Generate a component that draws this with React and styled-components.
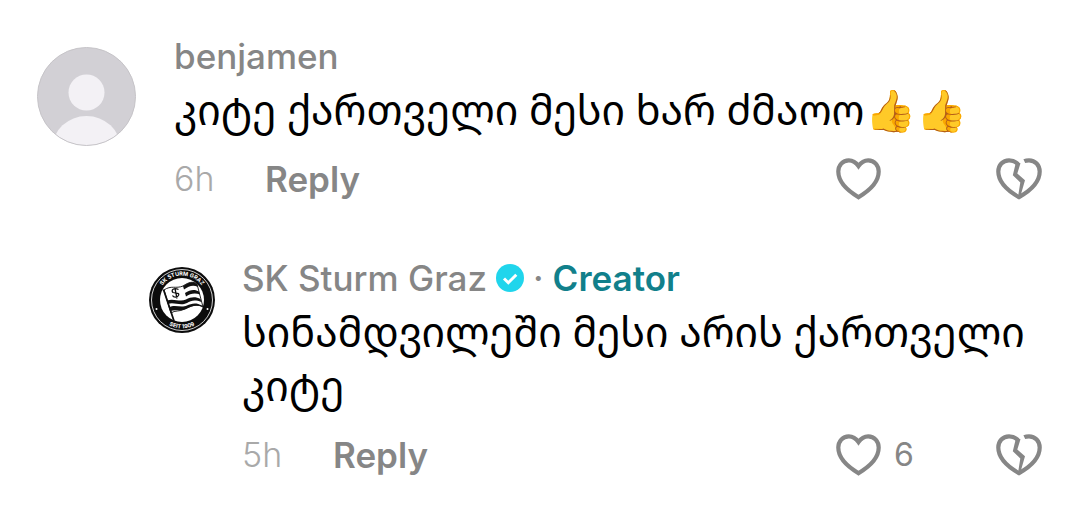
import React, { useState } from 'react';
import styled, { createGlobalStyle } from 'styled-components';


const GlobalStyle = createGlobalStyle`
    body {
        margin: 0;
        background: #ffffff;
        font-family: Inter, 'DejaVu Sans', sans-serif;
    }
`;

const CommentList = styled.main`
    display: flex;
    flex-direction: column;
    gap: 56px;
    padding: 36px 38px 36px 37px;
`;

const Comment = styled.article`
    display: flex;
    align-items: flex-start;
    gap: ${({ $reply }) => ($reply ? '27px' : '38px')};
    padding-left: ${({ $reply }) => ($reply ? '112px' : '0')};
`;

const Avatar = styled.svg`
    flex: none;
    display: block;
    width: ${({ $small }) => ($small ? '66px' : '99px')};
    height: ${({ $small }) => ($small ? '66px' : '99px')};
    margin-top: ${({ $small }) => ($small ? '9px' : '11px')};
`;

const Content = styled.div`
    flex: 1;
    min-width: 0;
`;

const NameRow = styled.div`
    display: flex;
    align-items: center;
    gap: 9px;
    height: 40px;
`;

const UserName = styled.a`
    color: #868686;
    font-size: 35px;
    font-weight: 500;
    line-height: 38px;
    text-decoration: none;
`;

const Dot = styled.span`
    color: #868686;
    font-size: 35px;
    font-weight: 500;
    line-height: 38px;
`;

const Creator = styled.span`
    color: #11808b;
    font-size: 35px;
    font-weight: 600;
    line-height: 38px;
`;

const CheckIcon = styled.svg`
    width: 28px;
    height: 28px;
`;

const Message = styled.p`
    margin: 6px 0 20px;
    color: #000000;
    font-family: 'Noto Sans Georgian', 'DejaVu Sans', sans-serif;
    font-size: 41px;
    line-height: 54px;
`;

const Actions = styled.div`
    display: flex;
    align-items: center;
    height: 46px;
`;

const Time = styled.time`
    color: #a9a9a9;
    font-size: 34px;
    font-weight: 300;
    line-height: 40px;
    width: 91px;
`;

const ActionButton = styled.button`
    display: flex;
    align-items: center;
    gap: 12px;
    padding: 0;
    border: none;
    background: none;
    color: #868686;
    font-family: inherit;
    font-size: ${({ $bold }) => ($bold ? '35px' : '32px')};
    font-weight: ${({ $bold }) => ($bold ? 600 : 400)};
    line-height: 40px;
    cursor: pointer;
`;

const Votes = styled.div`
    display: grid;
    grid-template-columns: 160px 46px;
    margin-left: auto;
`;

const VoteIcon = styled.svg`
    width: 46px;
    height: 42px;
    fill: ${({ $filled }) => ($filled ? '#868686' : 'none')};
    stroke: #868686;
    stroke-width: 4.2;
`;

const Heart = ({ filled }) => (
    <VoteIcon $filled={filled} viewBox="0 0 46 42" aria-hidden="true">
        <path d="M22.5 8C20 4.400 16.700 2.300 12.800 2.300C6.700 2.300 2.300 7.200 2.300 13.600C2.300 24 12 33 22.500 39.200C33 33 42.700 24 42.700 13.600C42.700 7.200 38.300 2.300 32.200 2.300C28.300 2.300 25 4.400 22.500 8Z" />
    </VoteIcon>
);

const BrokenHeart = () => (
    <VoteIcon viewBox="0 0 46 42" aria-hidden="true">
        <path d="M22 6C19.500 3.500 16.500 2.300 13 2.300C6.800 2.300 2.300 7.200 2.300 13.600C2.300 24 12 33 23 39.200C34 33 43.700 24 43.700 13.600C43.700 7.200 39.200 2.300 33 2.300C31.300 2.300 29.800 2.500 28.300 3.200" />
        <path d="M20 4L24.500 5.300L21.300 15.500L29 22.300L24.200 39H22L24.300 24.500L16.800 17.200Z" fill="#868686" stroke="none" />
    </VoteIcon>
);

const DefaultAvatar = () => (
    <Avatar viewBox="0 0 99 99" role="img" aria-label="benjamen">
        <clipPath id="face"><circle cx="49.500" cy="49.500" r="49" /></clipPath>
        <g clipPath="url(#face)">
            <rect width="99" height="99" fill="#d2d0d5" />
            <circle cx="49.500" cy="45.500" r="18" fill="#f3f1f5" />
            <ellipse cx="49.500" cy="101" rx="34" ry="32" fill="#f3f1f5" />
        </g>
        <circle cx="49.500" cy="49.500" r="49" fill="none" stroke="#c6c4c8" />
    </Avatar>
);

const ClubAvatar = () => (
    <Avatar $small viewBox="0 0 66 66" role="img" aria-label="SK Sturm Graz">
        <circle cx="33" cy="33" r="33" fill="#0c0c0c" />
        <circle cx="33" cy="33" r="30.500" fill="none" stroke="#e6e6e6" strokeWidth="0.900" />
        <circle cx="33" cy="33" r="22" fill="#ffffff" />
        <path id="ringTop" d="M8.500 33A24.500 24.500 0 0 1 57.500 33" fill="none" />
        <path id="ringBottom" d="M4.700 33A28.300 28.300 0 0 0 61.300 33" fill="none" />
        <g fill="#ffffff" fontFamily="Inter, sans-serif" fontSize="5.500" fontWeight="700" textAnchor="middle">
            <text><textPath href="#ringTop" startOffset="50%">SK STURM GRAZ</textPath></text>
            <text><textPath href="#ringBottom" startOffset="50%">SEIT 1909</textPath></text>
        </g>
        <circle cx="7.500" cy="42" r="1" fill="#ffffff" />
        <circle cx="58.500" cy="42" r="1" fill="#ffffff" />
        <path d="M15 23C22 18 27 22 34 19C40 15 44 14 48 17L54 40C47 36 42 39 36 42C30 45 26 43 22 46Z" fill="#ffffff" stroke="#111111" strokeWidth="0.900" />
        <path d="M34 19C40 15 44 14 48 17L49 20C44 17.500 40 19 35 22.500Z" fill="#111111" />
        <path d="M36 26C41 22.500 46 22 50 24.500L51 27.500C46 25.500 41 26.500 37 29.500Z" fill="#111111" />
        <path d="M18 33.500C25 31 31 35.500 37 32.500C42 29.500 47 29.500 51.500 32L52.300 35C46 32.500 42 33.500 38 36C31 39.500 25 34.500 19 37Z" fill="#111111" />
        <path d="M20 40.500C26 37 32 41.500 38 38.500C42 36.500 47 35 53 38.500L54 40C47 37.500 42 39.500 37 42C31 44.500 26 42 21.500 44Z" fill="#111111" />
        <path d="M29.500 22.500C25 20.500 21.500 23 24 25.500C27 26.500 31 25.500 29.500 28.500C28 31 24.500 30.500 23.500 28.500M26 21.500L28 31.500" fill="none" stroke="#111111" strokeWidth="1.300" />
        <path d="M14.500 22.500L25 54" stroke="#111111" strokeWidth="1.800" />
    </Avatar>
);

const Verified = () => (
    <CheckIcon viewBox="0 0 28 28" role="img" aria-label="Verified">
        <circle cx="14" cy="14" r="14" fill="#20d5ec" />
        <path d="M8 14.500L12.300 18.700L20.300 10.800" fill="none" stroke="#ffffff" strokeWidth="3" />
    </CheckIcon>
);

const CommentItem = ({ name, text, time, likes, isCreator, reply, avatar }) => {
    const [liked, setLiked] = useState(false);

    return (
        <Comment $reply={reply}>
            {avatar}
            <Content>
                <NameRow>
                    <UserName href="#">{name}</UserName>
                    {isCreator && (
                        <>
                            <Verified />
                            <Dot>·</Dot>
                            <Creator>Creator</Creator>
                        </>
                    )}
                </NameRow>
                <Message lang="ka">{text}</Message>
                <Actions>
                    <Time>{time}</Time>
                    <ActionButton $bold>Reply</ActionButton>
                    <Votes>
                        <ActionButton aria-label="Like" onClick={() => setLiked(!liked)}>
                            <Heart filled={liked} />
                            {likes}
                        </ActionButton>
                        <ActionButton aria-label="Dislike">
                            <BrokenHeart />
                        </ActionButton>
                    </Votes>
                </Actions>
            </Content>
        </Comment>
    );
};

export default function App() {
    return (
        <>
            <GlobalStyle />
            <CommentList>
                <CommentItem
                    name="benjamen"
                    text="კიტე ქართველი მესი ხარ ძმაოო👍👍"
                    time="6h"
                    avatar={<DefaultAvatar />}
                />
                <CommentItem
                    reply
                    isCreator
                    name="SK Sturm Graz"
                    text="სინამდვილეში მესი არის ქართველი კიტე"
                    time="5h"
                    likes={6}
                    avatar={<ClubAvatar />}
                />
            </CommentList>
        </>
    );
}
